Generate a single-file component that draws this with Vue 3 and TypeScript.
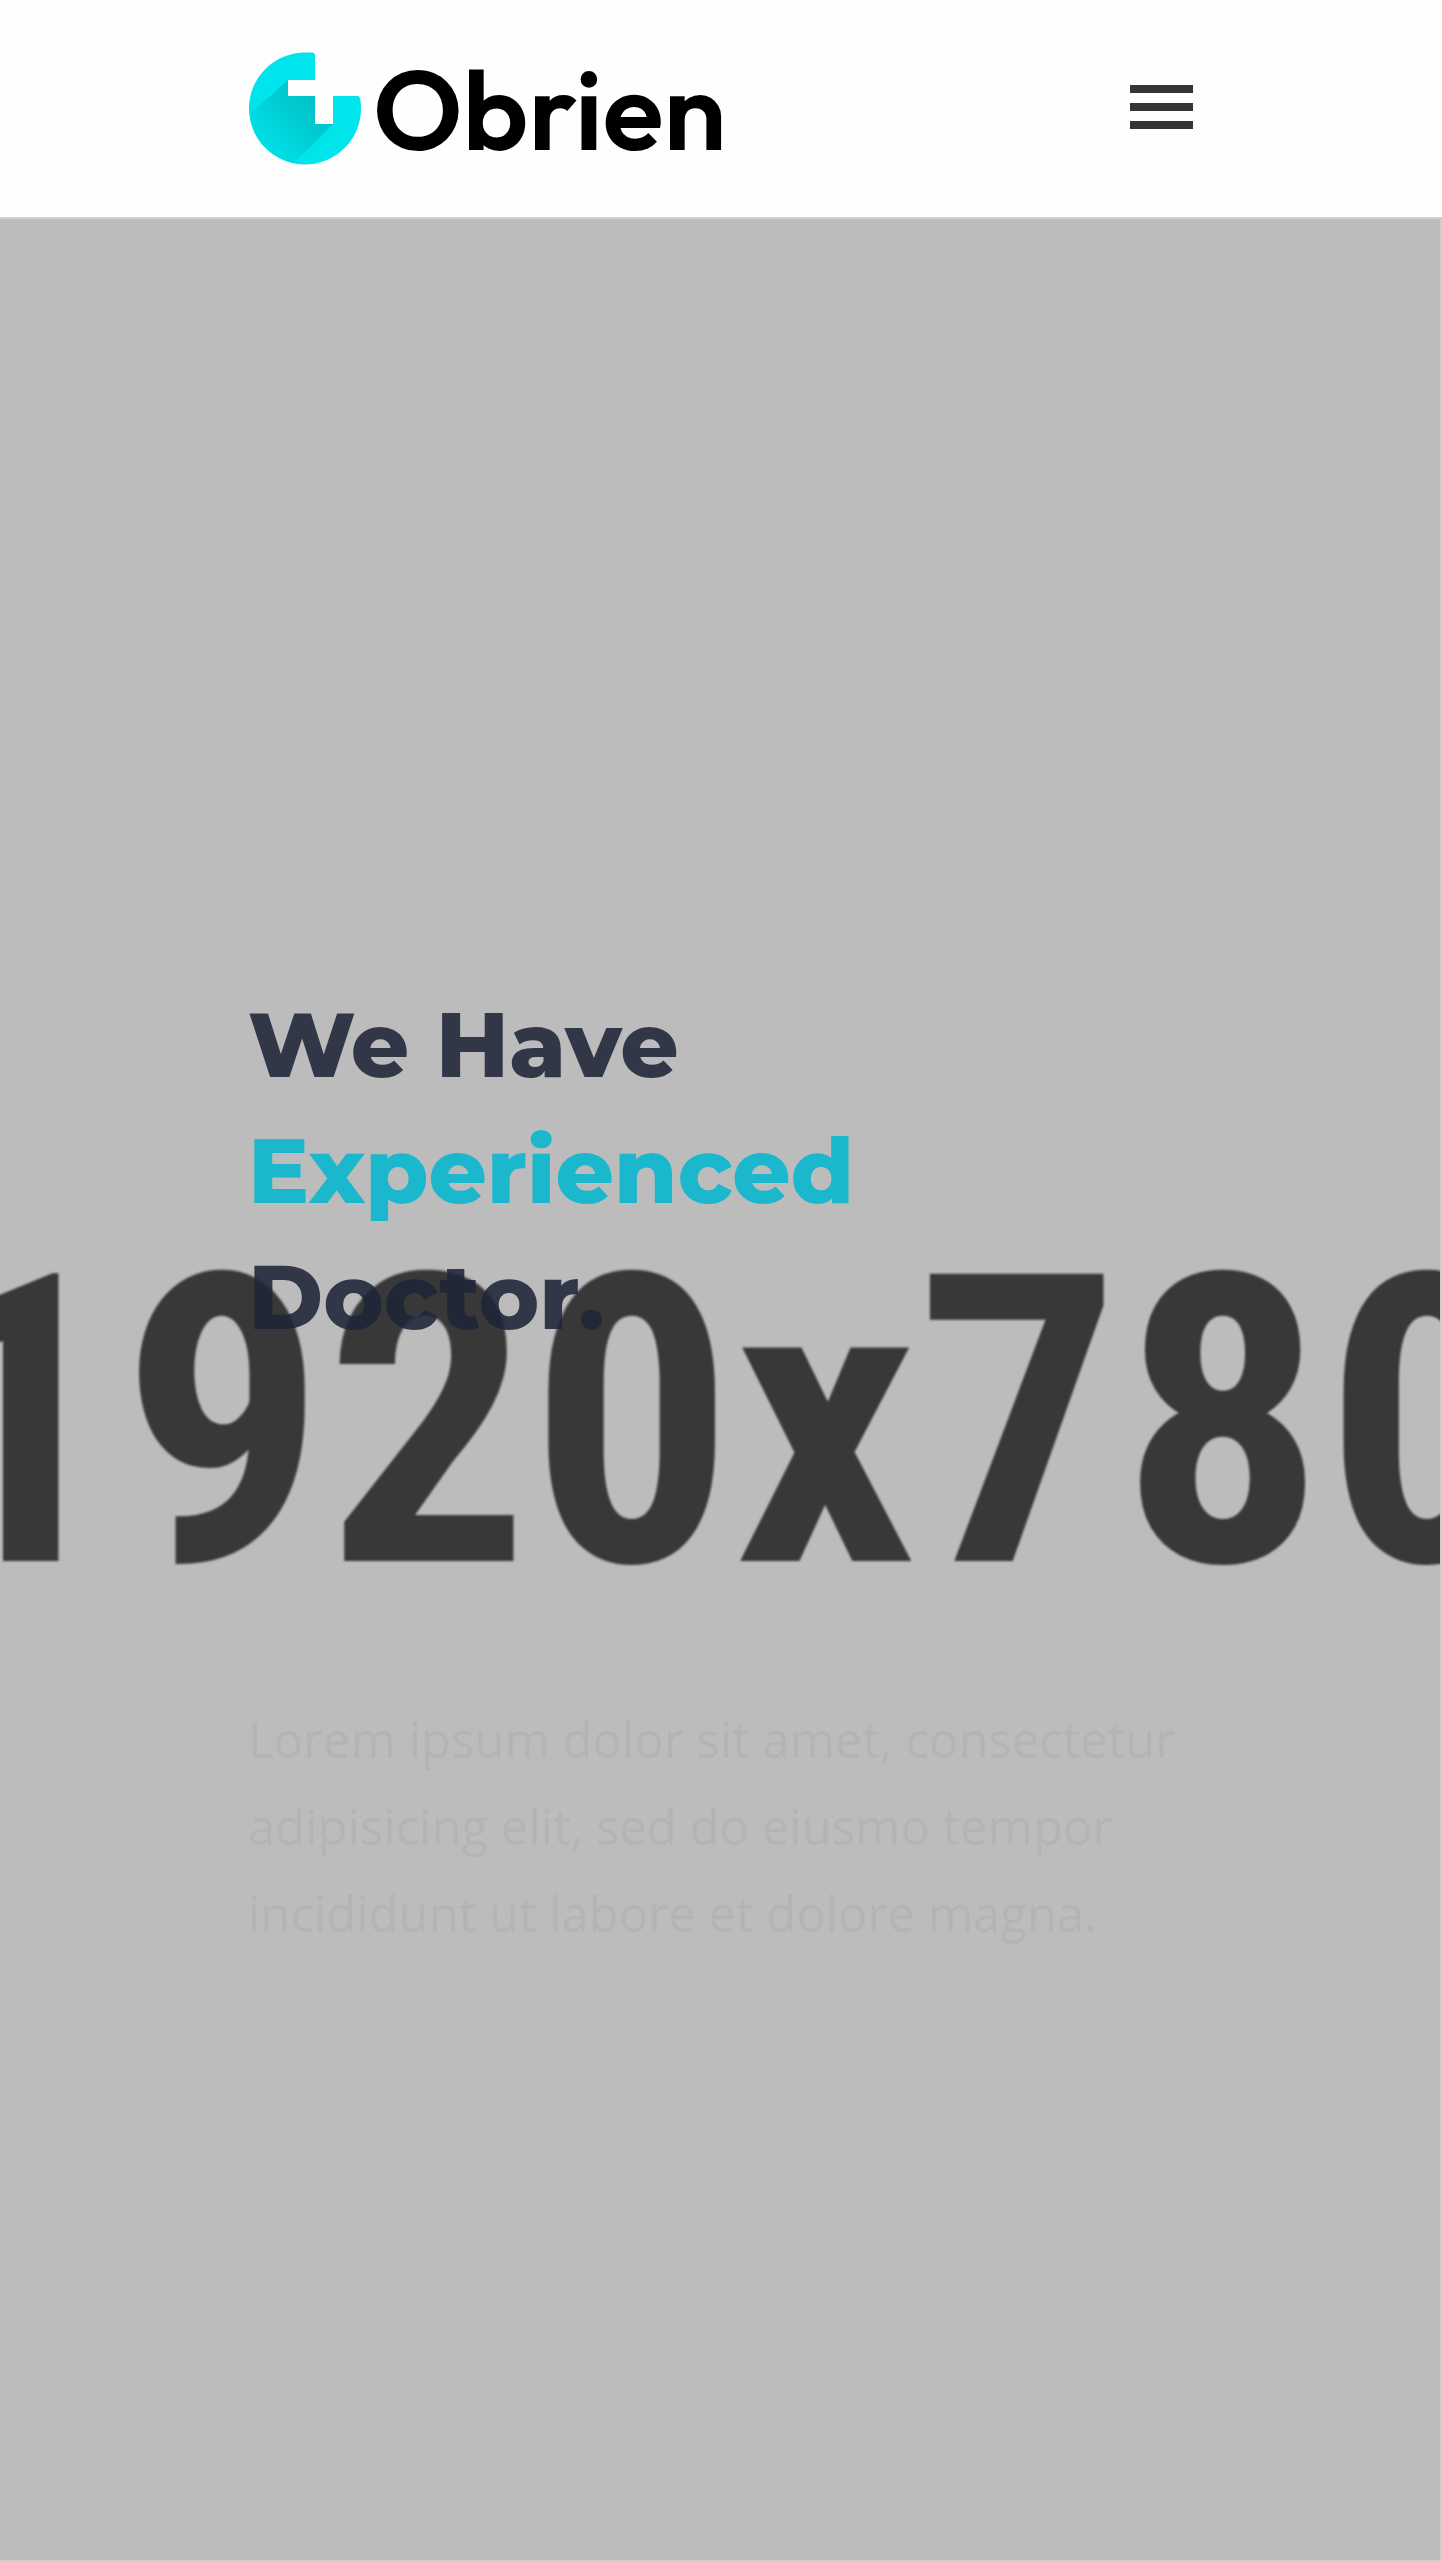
<script setup lang="ts">
import { ref } from 'vue'

const menuOpen = ref(false)
const placeholderSize = '1920x780'
</script>

<template>
  <div class="page">
    <header class="header">
      <div class="container header-row">
        <a class="logo" href="#" aria-label="Obrien home">
          <svg class="logo-mark" viewBox="0 0 112 113" aria-hidden="true">
            <defs>
              <linearGradient id="shade" gradientUnits="userSpaceOnUse" x1="70" y1="44" x2="20" y2="94">
                <stop offset="0" stop-color="#00bfc5" />
                <stop offset="1" stop-color="#00dde4" />
              </linearGradient>
            </defs>
            <path
              fill="#00e4eb"
              d="M56 0.5H63Q66 0.5 66 3.5V28H39V44H66V72H84V44H109Q112 44 112 56.5A56 56 0 1 1 56 0.5Z"
            />
            <path fill="url(#shade)" d="M39 28L1 62A56 56 0 0 0 45 111L84 72H66V44H39Z" />
          </svg>
          <span class="logo-name">Obrien</span>
        </a>
        <button
          class="menu"
          type="button"
          aria-label="Menu"
          :aria-expanded="menuOpen"
          @click="menuOpen = !menuOpen"
        >
          <span class="bar"></span>
          <span class="bar"></span>
          <span class="bar"></span>
        </button>
      </div>
    </header>

    <main class="hero">
      <div class="backdrop" aria-hidden="true">
        <span class="backdrop-size">{{ placeholderSize }}</span>
      </div>
      <div class="container hero-content">
        <h1 class="title">
          We Have<br />
          <span class="accent">Experienced</span><br />
          Doctor.
        </h1>
        <p class="lead">
          Lorem ipsum dolor sit amet, consectetur adipisicing elit, sed do eiusmo tempor incididunt
          ut labore et dolore magna.
        </p>
      </div>
    </main>
  </div>
</template>

<style>
body {
  margin: 0;
}
</style>

<style scoped>
.page {
  display: flex;
  flex-direction: column;
  min-height: 100vh;
  background: #fefefe;
}

.container {
  box-sizing: border-box;
  width: 100%;
  max-width: 944px;
  margin: 0 auto;
}

.header-row {
  display: flex;
  justify-content: space-between;
  align-items: center;
  padding: 52px 0;
}

.logo {
  display: flex;
  align-items: center;
  gap: 12px;
  color: #000;
  text-decoration: none;
}

.logo-mark {
  width: 112px;
  height: 113px;
}

.logo-name {
  font: 600 112px/112px Outfit, Lato, sans-serif;
}

.menu {
  display: flex;
  flex-direction: column;
  gap: 10px;
  width: 63px;
  padding: 0 0 4px;
  border: 0;
  background: none;
  cursor: pointer;
}

.bar {
  height: 8px;
  background: #343434;
}

.hero {
  position: relative;
  flex: 1;
  box-sizing: border-box;
  border: solid #cfcfcf;
  border-width: 2px 2px 2px 0;
  background: #bcbcbc;
}

.backdrop {
  position: absolute;
  inset: 0;
  display: flex;
  align-items: center;
  justify-content: center;
  padding: 66px 0 0 6px;
  overflow: hidden;
}

.backdrop-size {
  color: #383838;
  font: 700 404px/404px 'Roboto Condensed', 'Liberation Sans Narrow', Roboto, sans-serif;
  white-space: nowrap;
  filter: blur(1px);
}

.hero-content {
  position: relative;
  padding: 763px 0 600px;
}

.title {
  margin: 0;
  color: #1f2539;
  font: 800 91px/126px Montserrat, Inter, sans-serif;
  opacity: 0.88;
}

.accent {
  color: #04b7d0;
}

.lead {
  margin: 336px 0 0;
  color: #b4b4b4;
  font: 400 49px/87px 'Open Sans', sans-serif;
}
</style>
